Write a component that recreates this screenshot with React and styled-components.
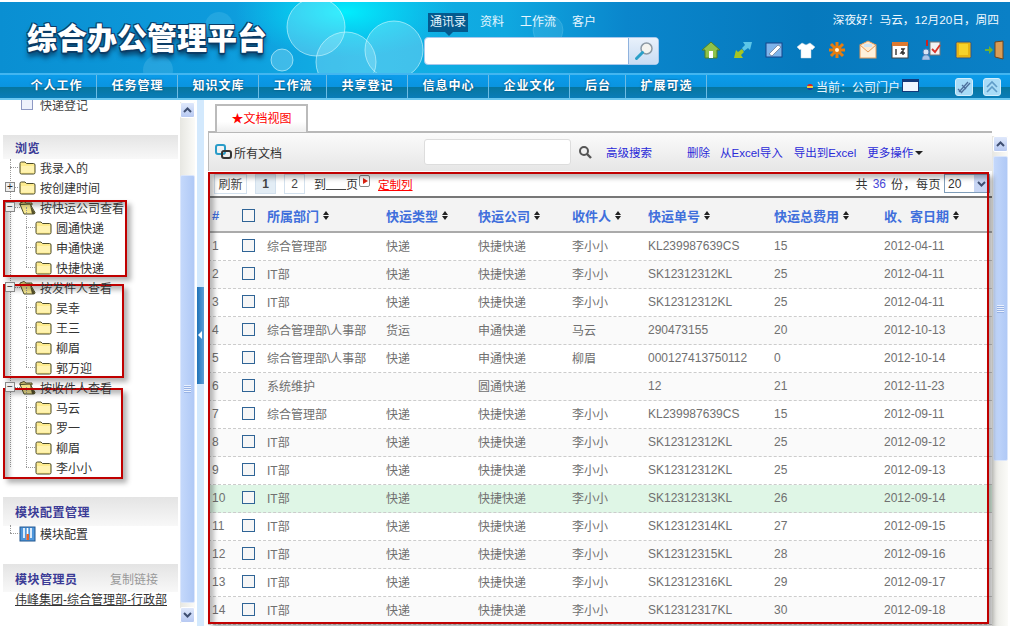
import styled, { createGlobalStyle } from 'styled-components';

const CJK = `"Liberation Sans", "Noto Sans CJK SC", sans-serif`;

const GlobalStyle = createGlobalStyle`
  html, body { margin: 0; padding: 0; background: #fff; }
  body { font-family: ${CJK}; font-size: 12px; color: #333; }
  * { box-sizing: border-box; }
`;

const NAV_ITEMS = [
  ['个人工作', 81], ['任务管理', 81], ['知识文库', 81], ['工作流', 68], ['共享登记', 81],
  ['信息中心', 81], ['企业文化', 81], ['后台', 56], ['扩展可选', 81],
];

const ROWS = [
  ['综合管理部', '快递', '快捷快递', '李小小', 'KL239987639CS', '15', '2012-04-11'],
  ['IT部', '快递', '快捷快递', '李小小', 'SK12312312KL', '25', '2012-04-11'],
  ['IT部', '快递', '快捷快递', '李小小', 'SK12312312KL', '25', '2012-04-11'],
  ['综合管理部\\人事部', '货运', '申通快递', '马云', '290473155', '20', '2012-10-13'],
  ['综合管理部\\人事部', '快递', '申通快递', '柳眉', '000127413750112', '0', '2012-10-14'],
  ['系统维护', '', '圆通快递', '', '12', '21', '2012-11-23'],
  ['综合管理部', '快递', '快捷快递', '李小小', 'KL239987639CS', '15', '2012-09-11'],
  ['IT部', '快递', '快捷快递', '李小小', 'SK12312312KL', '25', '2012-09-12'],
  ['IT部', '快递', '快捷快递', '李小小', 'SK12312312KL', '25', '2012-09-13'],
  ['IT部', '快递', '快捷快递', '李小小', 'SK12312313KL', '26', '2012-09-14'],
  ['IT部', '快递', '快捷快递', '李小小', 'SK12312314KL', '27', '2012-09-15'],
  ['IT部', '快递', '快捷快递', '李小小', 'SK12312315KL', '28', '2012-09-16'],
  ['IT部', '快递', '快捷快递', '李小小', 'SK12312316KL', '29', '2012-09-17'],
  ['IT部', '快递', '快捷快递', '李小小', 'SK12312317KL', '30', '2012-09-18'],
];

const COLUMNS = ['所属部门', '快运类型', '快运公司', '收件人', '快运单号', '快运总费用', '收、寄日期'];

const TREE = [
  { label: '我录入的', kind: 'leaf' },
  { label: '按创建时间', kind: 'closed' },
  { label: '按快运公司查看', kind: 'open', children: ['圆通快递', '申通快递', '快捷快递'] },
  { label: '按发件人查看', kind: 'open', children: ['吴幸', '王三', '柳眉', '郭万迎'] },
  { label: '按收件人查看', kind: 'open', children: ['马云', '罗一', '柳眉', '李小小'] },
];

const Folder = () => (
  <svg width="17" height="15" viewBox="0 0 17 15">
    <path d="M1 3.5 Q1 2 2.5 2 H6 L7.5 3.5 H14.5 Q16 3.5 16 5 V12.5 Q16 14 14.5 14 H2.5 Q1 14 1 12.5 Z" fill="#fdeb8e" stroke="#4a4a2a" strokeWidth="1" />
    <path d="M2 6 H15 V12.5 H2 Z" fill="#fff3b0" />
  </svg>
);

const OpenFolder = () => (
  <svg width="17" height="15" viewBox="0 0 17 15">
    <path d="M1 3 L5 1.5 L7 3 H13 V5 H1 Z" fill="#e4d27a" stroke="#55502a" strokeWidth="1" />
    <path d="M1 4.5 L11 4 L16 12.5 Q16 14 14.5 14 H5 Z" fill="#f6e78f" stroke="#4a4a2a" strokeWidth="1" />
    <path d="M11 5 L16 13 V14 H13 Z" fill="#55502a" />
  </svg>
);

const ScrollArrow = ({ down }) => (
  <svg width="9" height="6" viewBox="0 0 9 6">
    <path d={down ? 'M1 1 L4.5 4.5 L8 1' : 'M1 5 L4.5 1.5 L8 5'} fill="none" stroke="#3f4f72" strokeWidth="2" />
  </svg>
);

const HEAD_ICONS = [
  <g key="home">
    <path d="M10 2 L19 10 H16 V18 H4 V10 H1 Z" fill="#8fc24a" stroke="#4d7f27" />
    <rect x="8" y="11" width="4" height="7" fill="#fff" />
  </g>,
  <g key="arrows">
    <path d="M1 18 L3 10 L5 12 L9 9 L11 12 L8 15 L10 18 Z" fill="#a7c521" />
    <path d="M19 2 L17 10 L15 8 L11 11 L9 8 L12 5 L10 2 Z" fill="#5cc6e8" />
  </g>,
  <g key="edit">
    <rect x="2" y="3" width="16" height="14" fill="#7fb4ea" stroke="#16448a" />
    <path d="M5 14 L14 5 L17 7 L8 16 Z" fill="#fff" stroke="#52627c" strokeWidth="0.6" />
  </g>,
  <path key="shirt" d="M6 3 L10 5 L14 3 L19 7 L16 10 L15 9 V18 H5 V9 L4 10 L1 7 Z" fill="#fff" stroke="#cfd6dc" strokeWidth="0.5" />,
  <g key="gear" stroke="#e57d0f" strokeWidth="3">
    <path d="M10 2 V18 M2 10 H18 M4 4 L16 16 M16 4 L4 16" />
    <circle cx="10" cy="10" r="3" fill="#fff3d6" stroke="#e57d0f" strokeWidth="2" />
  </g>,
  <g key="mail">
    <rect x="2" y="5" width="16" height="13" fill="#fff1dc" stroke="#e59a5a" />
    <path d="M2 5 L10 1 L18 5 L10 12 Z" fill="#fde9d0" stroke="#e59a5a" />
    <rect x="6" y="4" width="8" height="3" fill="#cfe4f5" />
  </g>,
  <g key="calendar">
    <rect x="2" y="4" width="16" height="14" fill="#fff" stroke="#444" />
    <rect x="2" y="2" width="16" height="4" fill="#dd7a30" />
    <path d="M6 9 V15 M11 9 H14 L11 13 H15 M13 9 V15" stroke="#333" strokeWidth="1.4" fill="none" />
  </g>,
  <g key="person">
    <rect x="9" y="2" width="10" height="13" fill="#f2f2f2" stroke="#777" />
    <path d="M11 9 L14 12 L19 5" stroke="#d9342b" strokeWidth="1.8" fill="none" />
    <circle cx="5" cy="12" r="3" fill="#d9e6f5" stroke="#5a7fb5" />
    <path d="M1 20 Q1 15 5 15 Q9 15 9 20 Z" fill="#a9c4e8" stroke="#5a7fb5" strokeWidth="0.6" />
    <rect x="5" y="0" width="2" height="6" fill="#c22" />
  </g>,
  <g key="note">
    <rect x="3" y="2" width="15" height="16" rx="1.5" fill="#e7b413" stroke="#31568a" />
    <rect x="6" y="4" width="9" height="11" fill="#f8d32a" />
  </g>,
  <g key="exit">
    <path d="M11 2 L19 1 V19 L11 17 Z" fill="#d99c56" stroke="#6a4520" />
    <path d="M1 9 H5 V6 L9 10 L5 14 V11 H1 Z" fill="#6fb22f" />
  </g>,
];

const Header = styled.header`
  position: relative;
  height: 71px;
  margin-top: 2px;
  overflow: hidden;
  background: linear-gradient(90deg, #0a8fd2 0%, #0d9bdc 22%, #12b2e6 36%, #0fa8e0 50%, #0a86cc 62%, #0679bd 80%, #0a80c6 100%);
`;

const HeaderArt = styled.svg`
  position: absolute;
  inset: 0;
`;

const HeaderInner = styled.div`
  position: relative;
  display: flex;
  height: 100%;
`;

const Logo = styled.div`
  width: 424px;
  padding: 17px 0 0 27px;
  font-size: 30px;
  line-height: 40px;
  font-weight: 900;
  white-space: nowrap;
  color: #fff;
  text-shadow: 1px 1px 0 #0b3c66, -1px 1px 0 #0b3c66, 1px -1px 0 #0b3c66, -1px -1px 0 #0b3c66, 0 2px 1px #0b3c66, 0 5px 5px #083a60;
`;

const SearchArea = styled.div`
  width: 236px;
  padding-top: 11px;
`;

const SearchTabs = styled.div`
  display: flex;
  height: 24px;
  padding-left: 4px;
`;

const SearchTab = styled.span`
  position: relative;
  height: 19px;
  line-height: 19px;
  padding: 0 2px;
  margin-right: ${(p) => p.$gap}px;
  color: #e6f6ff;
  background: ${(p) => (p.$active ? '#045a8e' : 'transparent')};

  ${(p) => p.$active && `
    &::after {
      content: '';
      position: absolute;
      left: 17px;
      bottom: -4px;
      border: 4px solid transparent;
      border-bottom: 0;
      border-top-color: #045a8e;
    }
  `}
`;

const SearchBox = styled.div`
  display: flex;
  width: 235px;
  height: 28px;
  border-radius: 4px;
  overflow: hidden;
  border: 1px solid #a8c8ec;
  background: #fff;
`;

const SearchField = styled.div`
  flex: 1;
`;

const SearchButton = styled.div`
  width: 30px;
  display: flex;
  align-items: center;
  justify-content: center;
  border-left: 1px solid #8fb2de;
  background: linear-gradient(#e8f1fb, #c9dcf3);
`;

const HeaderRight = styled.div`
  flex: 1;
  display: flex;
  flex-direction: column;
  align-items: flex-end;
  padding: 10px 11px 0 0;
`;

const Greeting = styled.div`
  height: 16px;
  line-height: 16px;
  color: #f0f9ff;
  font-size: 11.7px;
  white-space: nowrap;
`;

const IconRow = styled.div`
  display: flex;
  gap: 11.4px;
  margin-top: 12px;
  margin-right: -5px;
`;

const Nav = styled.nav`
  display: flex;
  align-items: stretch;
  height: 27px;
  padding-left: 16px;
  border-top: 2px solid #43b6f0;
  border-bottom: 2px solid #6cc8f0;
  background: linear-gradient(#0b9cea 0%, #0a94e0 50%, #06769f 52%, #0a7db8 100%);
`;

const NavItem = styled.div`
  width: ${(p) => p.$width}px;
  padding-left: 1px;
  text-align: center;
  line-height: 23px;
  font-weight: 700;
  font-size: 12px;
  letter-spacing: 1px;
  color: #fff;
  text-shadow: 0 0 2px #06406a;
  border-right: 1px solid #6dbbe3;
`;

const NavRight = styled.div`
  flex: 1;
  display: flex;
  align-items: center;
  padding-left: 100px;
  color: #eaf7ff;
  font-size: 12px;
`;

const CurrentDot = styled.span`
  width: 6px;
  height: 6px;
  margin-right: 3px;
  border-radius: 50%;
  background: linear-gradient(#d22 0 33%, #ec3 33% 66%, #23a 66%);
`;

const WindowIcon = styled.span`
  width: 17px;
  height: 13px;
  margin: -3px 0 0 2px;
  border: 1px solid #123a7a;
  border-top-width: 3px;
  background: #eef6ff;
`;

const NavButton = styled.span`
  display: flex;
  align-items: center;
  justify-content: center;
  width: 18px;
  height: 18px;
  margin-left: ${(p) => p.$gap}px;
  border-radius: 3px;
  background: #a9dcf7;
  border: 1px solid #d4eefb;
`;

const Body = styled.div`
  position: relative;
  display: flex;
  height: 526px;
  overflow: hidden;
`;

const Sidebar = styled.aside`
  width: 180px;
  flex: none;
  overflow: hidden;
`;

const TopEntry = styled.div`
  display: flex;
  align-items: center;
  gap: 7px;
  height: 18px;
  margin-top: -5px;
  padding-left: 21px;
  color: #444;
`;

const EntryBox = styled.span`
  width: 12px;
  height: 12px;
  border: 1px solid #8e99c4;
  background: #eef2fc;
`;

const SectionHead = styled.div`
  display: flex;
  justify-content: space-between;
  align-items: center;
  height: ${(p) => p.$height}px;
  margin: ${(p) => p.$top}px 2px 0 3px;
  padding: 0 20px 0 12px;
  background: linear-gradient(#e4e4e4, #f8f8f8);
`;

const SectionTitle = styled.span`
  color: #3b3b96;
  font-weight: 700;
  font-size: 12px;
  letter-spacing: 0.5px;
`;

const CopyLink = styled.span`
  color: #999;
`;

const Tree = styled.div`
  position: relative;
  margin-top: ${(p) => p.$top}px;

  &::before {
    content: '';
    position: absolute;
    left: 10px;
    top: 2px;
    bottom: 10px;
    border-left: 1px dotted #999;
  }
`;

const TreeRow = styled.div`
  position: relative;
  display: flex;
  align-items: center;
  height: 20px;
  padding-left: ${(p) => (p.$child ? 35 : 19)}px;
  color: #333;
  white-space: nowrap;

  &::before {
    content: '';
    position: absolute;
    left: ${(p) => (p.$child ? 26 : 10)}px;
    width: ${(p) => (p.$child ? 9 : 10)}px;
    top: 10px;
    border-top: 1px dotted #999;
  }

  ${(p) => p.$child && `
    &::after {
      content: '';
      position: absolute;
      left: 26px;
      top: -10px;
      height: 20px;
      border-left: 1px dotted #999;
    }
  `}
`;

const TreeToggle = styled.span`
  position: absolute;
  z-index: 1;
  left: 5px;
  top: 5px;
  width: 10px;
  height: 10px;
  line-height: 7px;
  text-align: center;
  font-size: 10px;
  color: #222;
  background: #eee;
  border: 1px solid #888;
`;

const TreeLabel = styled.span`
  margin-left: 4px;
  position: relative;
  z-index: 1;
`;

const OwnerLink = styled.div`
  margin: -1px 0 0 15px;
  color: #333;
  text-decoration: underline;
  white-space: nowrap;
  line-height: 18px;
`;

const ScrollBar = styled.div`
  width: ${(p) => p.$width}px;
  flex: none;
  display: flex;
  flex-direction: column;
  align-items: center;
  height: 521px;
  margin-top: ${(p) => p.$top}px;
  background: linear-gradient(90deg, #e7e7e2, #fbfbf8);
`;

const ScrollButton = styled.div`
  display: flex;
  align-items: center;
  justify-content: center;
  width: 15px;
  height: 16px;
  flex: none;
  border-radius: 2px;
  border: 1px solid #fff;
  background: linear-gradient(#dfe8fb, #b7c9f2);
`;

const ScrollThumb = styled.div`
  display: flex;
  align-items: center;
  justify-content: center;
  width: 15px;
  height: ${(p) => p.$height}px;
  margin-top: ${(p) => p.$top}px;
  border-radius: 2px;
  border: 1px solid #dbe6fb;
  background: linear-gradient(90deg, #c4d8fb, #b0c9f6);
`;

const ScrollGap = styled.div`
  flex: 1;
`;

const Grip = styled.span`
  width: 7px;
  height: 8px;
  background: repeating-linear-gradient(#e9f0fd 0 1px, #98b3e6 1px 2px);
`;

const Splitter = styled.div`
  width: 7px;
  flex: none;
  display: flex;
  align-items: center;
  margin-left: 2px;
  background: #d3e9fd;
`;

const SplitterHandle = styled.div`
  position: relative;
  width: 100%;
  height: 97px;
  margin-top: -56px;
  background: linear-gradient(90deg, #1f72b8, #5b9fd6);

  &::after {
    content: '';
    position: absolute;
    left: 1px;
    top: 44px;
    border: 4px solid transparent;
    border-left: 0;
    border-right-color: #fff;
  }
`;

const Main = styled.main`
  flex: none;
  width: 784px;
  margin-left: 4px;
`;

const TabBar = styled.div`
  height: 33px;
  padding: 4px 0 0 7px;
  border-bottom: 2px solid #b8b8b8;
`;

const Tab = styled.div`
  width: 93px;
  height: 28px;
  text-align: center;
  line-height: 27px;
  color: #f00;
  border: 2px solid #bbb;
  border-bottom: 0;
  background: linear-gradient(#fff 60%, #eee);
`;

const Toolbar = styled.div`
  display: flex;
  align-items: center;
  height: 38px;
  padding-left: 6px;
  background: linear-gradient(#fbfbfb, #e6e6e6);
  border-left: 1px solid #bbb;
`;

const ToolTitle = styled.span`
  margin: 0 142px 0 1px;
  color: #333;
`;

const ToolInput = styled.div`
  width: 147px;
  height: 26px;
  background: #fff;
  border: 1px solid #ddd;
  border-radius: 3px;
`;

const ToolSearchIcon = styled.svg`
  margin-left: 7px;
`;

const ToolLink = styled.span`
  margin-left: ${(p) => p.$gap}px;
  color: #2a2ad8;
  white-space: nowrap;
  font-size: 11.5px;
`;

const Caret = styled.span`
  display: inline-block;
  margin-left: 2px;
  vertical-align: 2px;
  border: 4px solid transparent;
  border-bottom: 0;
  border-top: 4px solid #222;
`;

const Pager = styled.div`
  display: flex;
  align-items: center;
  height: 27px;
  padding: 0 2px 0 6px;
  border-bottom: 2px solid #777;
  color: #333;
`;

const PagerButton = styled.span`
  display: flex;
  align-items: center;
  justify-content: center;
  width: ${(p) => p.$width}px;
  height: 20px;
  margin-right: 8px;
  color: #444;
  font-weight: ${(p) => (p.$active ? 700 : 400)};
  background: ${(p) => (p.$active ? '#e3edf5' : '#fff')};
  border: 1px solid #d3e1ee;
`;

const PageTo = styled.span`
  margin-left: 1px;
`;

const PageBlank = styled.span`
  width: 20px;
  height: 13px;
  border-bottom: 1px solid #444;
`;

const NextPage = styled.span`
  width: 11px;
  height: 12px;
  margin: -5px 0 0 1px;
  padding: 2px 0 0 3px;
  border: 1px solid #888;
  border-radius: 2px;

  &::before {
    content: '';
    display: block;
    border: 3.5px solid transparent;
    border-right: 0;
    border-left: 5px solid #d21;
  }
`;

const CustomLink = styled.span`
  margin-left: 8px;
  color: #f00;
  text-decoration: underline;
  font-size: 11.5px;
`;

const PagerRight = styled.div`
  margin-left: auto;
  display: flex;
  align-items: center;
`;

const Count = styled.span`
  color: #4747d8;
  margin: 0 5px;
`;

const PerPage = styled.span`
  letter-spacing: 0.5px;
`;

const PageSelect = styled.span`
  display: flex;
  align-items: center;
  justify-content: space-between;
  width: 46px;
  height: 19px;
  margin-left: 3px;
  padding-left: 3px;
  border: 1px solid #7f9db9;
  font-size: 12px;
`;

const SelectArrow = styled.span`
  display: flex;
  align-items: center;
  justify-content: center;
  width: 15px;
  height: 100%;
  background: #c8d6f4;
`;

const Row = styled.div`
  display: grid;
  grid-template-columns: 30px 25px 119px 92px 94px 76px 126px 110px 1fr;
  align-items: center;
  padding: ${(p) => (p.$head ? '1px 0 0 4px' : '0 0 2px 4px')};
  height: ${(p) => (p.$head ? 35 : 28)}px;
  border-bottom: ${(p) => (p.$head ? '2px solid #aaa' : '1px dashed #ccc')};
  background: ${(p) => p.$bg};
  color: #707070;
  white-space: nowrap;
`;

const HeadCell = styled.div`
  display: flex;
  align-items: center;
  color: #3f6fdc;
  font-weight: 700;
  font-size: 13px;
  white-space: nowrap;
`;

const SortMark = styled.span`
  display: flex;
  flex-direction: column;
  gap: 1px;
  margin-left: 4px;

  &::before,
  &::after {
    content: '';
    border: 3.5px solid transparent;
  }

  &::before {
    border-top: 0;
    border-bottom: 4px solid #222;
  }

  &::after {
    border-bottom: 0;
    border-top: 4px solid #222;
  }
`;

const Check = styled.span`
  display: block;
  width: 13px;
  height: 13px;
  border: 1px solid #2f6496;
  background: #f6f6f6;
`;

const Cell = styled.div`
  color: #707070;
  font-family: ${CJK};
`;

const RedBox = styled.div`
  position: absolute;
  left: ${(p) => p.$x}px;
  top: ${(p) => p.$y}px;
  width: ${(p) => p.$w}px;
  height: ${(p) => p.$h}px;
  border: 2px solid #c00000;
  box-shadow: 4px 4px 5px rgba(0, 0, 0, 0.3), inset 4px 4px 5px rgba(0, 0, 0, 0.28);
  pointer-events: none;
`;

const rowBackground = (index) => {
  if (index === 9) return '#dff6e6';
  return index % 2 === 1 ? '#fafafa' : '#fff';
};

const App = () => (
  <>
    <GlobalStyle />
    <Header>
      <HeaderArt width="1010" height="71" viewBox="0 0 1010 71">
        <defs>
          <radialGradient id="glow" cx="0.5" cy="0.5" r="0.5">
            <stop offset="0" stopColor="#00f2ff" stopOpacity="0.95" />
            <stop offset="1" stopColor="#00d8f5" stopOpacity="0" />
          </radialGradient>
        </defs>
        <ellipse cx="345" cy="10" rx="110" ry="45" fill="url(#glow)" />
        <g fill="#bff4ff" fillOpacity="0.28" stroke="#d5faff" strokeOpacity="0.6">
          <circle cx="316" cy="25" r="29" />
          <circle cx="346" cy="60" r="30" />
          <circle cx="394" cy="48" r="29" />
          <circle cx="282" cy="58" r="11" />
          <circle cx="219" cy="24" r="14" fillOpacity="0.12" strokeOpacity="0" />
          <circle cx="158" cy="68" r="15" fillOpacity="0.14" strokeOpacity="0" />
          <circle cx="548" cy="28" r="15" fillOpacity="0.12" strokeOpacity="0.15" />
        </g>
      </HeaderArt>
      <HeaderInner>
        <Logo>综合办公管理平台</Logo>
        <SearchArea>
          <SearchTabs>
            <SearchTab $active $gap={10}>通讯录</SearchTab>
            <SearchTab $gap={12}>资料</SearchTab>
            <SearchTab $gap={12}>工作流</SearchTab>
            <SearchTab $gap={0}>客户</SearchTab>
          </SearchTabs>
          <SearchBox>
            <SearchField />
            <SearchButton>
              <svg width="20" height="20" viewBox="0 0 20 20">
                <circle cx="12.5" cy="7.5" r="5.5" fill="#f4f4f0" stroke="#8d9aa5" strokeWidth="1.5" />
                <path d="M8.5 11.5 L2.5 17.5" stroke="#2aa0c8" strokeWidth="3" strokeLinecap="round" />
              </svg>
            </SearchButton>
          </SearchBox>
        </SearchArea>
        <HeaderRight>
          <Greeting>深夜好！马云，12月20日，周四</Greeting>
          <IconRow>
            {HEAD_ICONS.map((icon) => (
              <svg key={icon.key} width="20" height="20" viewBox="0 0 20 20">
                {icon}
              </svg>
            ))}
          </IconRow>
        </HeaderRight>
      </HeaderInner>
    </Header>

    <Nav>
      {NAV_ITEMS.map(([label, width]) => (
        <NavItem key={label} $width={width}>
          {label}
        </NavItem>
      ))}
      <NavRight>
        <CurrentDot />
        当前：公司门户
        <WindowIcon />
        <NavButton $gap={36}>
          <svg width="14" height="14" viewBox="0 0 14 14">
            <path d="M2 12 L11 2 M4 13 L13 3 M1 9 L5 13 M5 5 L9 9" stroke="#4d6f9c" strokeWidth="1.3" fill="none" />
          </svg>
        </NavButton>
        <NavButton $gap={10}>
          <svg width="14" height="14" viewBox="0 0 14 14">
            <path d="M2 7 L7 2 L12 7 M2 12 L7 7 L12 12" stroke="#5f9cc8" strokeWidth="1.6" fill="none" />
          </svg>
        </NavButton>
      </NavRight>
    </Nav>

    <Body>
      <Sidebar>
        <TopEntry>
          <EntryBox />
          快递登记
        </TopEntry>
        <SectionHead $height={24} $top={22}>
          <SectionTitle>浏览</SectionTitle>
        </SectionHead>
        <Tree $top={-2}>
          {TREE.map((node) => (
            <div key={node.label}>
              <TreeRow>
                {node.kind !== 'leaf' && <TreeToggle>{node.kind === 'open' ? '−' : '+'}</TreeToggle>}
                {node.kind === 'open' ? <OpenFolder /> : <Folder />}
                <TreeLabel>{node.label}</TreeLabel>
              </TreeRow>
              {node.children?.map((child) => (
                <TreeRow $child key={child}>
                  <Folder />
                  <TreeLabel>{child}</TreeLabel>
                </TreeRow>
              ))}
            </div>
          ))}
        </Tree>
        <SectionHead $height={29} $top={20}>
          <SectionTitle>模块配置管理</SectionTitle>
        </SectionHead>
        <Tree $top={-3}>
          <TreeRow>
            <svg width="17" height="17" viewBox="0 0 17 17">
              <rect x="1" y="2" width="15" height="14" fill="#4f97dc" stroke="#23578f" />
              <path d="M5 3 V13 M8.5 3 V15 M12 3 V13" stroke="#fff" strokeWidth="1.6" />
              <rect x="7.5" y="9" width="2.5" height="6" fill="#e8652a" />
            </svg>
            <TreeLabel>模块配置</TreeLabel>
          </TreeRow>
        </Tree>
        <SectionHead $height={28} $top={21}>
          <SectionTitle>模块管理员</SectionTitle>
          <CopyLink>复制链接</CopyLink>
        </SectionHead>
        <OwnerLink>伟峰集团-综合管理部-行政部</OwnerLink>
      </Sidebar>

      <ScrollBar $width={15} $top={2}>
        <ScrollButton>
          <ScrollArrow />
        </ScrollButton>
        <ScrollThumb $height={428} $top={57}>
          <Grip />
        </ScrollThumb>
        <ScrollGap />
        <ScrollButton>
          <ScrollArrow down />
        </ScrollButton>
      </ScrollBar>

      <Splitter>
        <SplitterHandle />
      </Splitter>

      <Main>
        <TabBar>
          <Tab>★文档视图</Tab>
        </TabBar>
        <Toolbar>
          <svg width="18" height="16" viewBox="0 0 18 16">
            <rect x="1" y="1" width="9" height="9" rx="2" fill="none" stroke="#2a9cc8" strokeWidth="2" />
            <rect x="7" y="7" width="9" height="7" rx="2" fill="none" stroke="#333" strokeWidth="2" />
          </svg>
          <ToolTitle>所有文档</ToolTitle>
          <ToolInput />
          <ToolSearchIcon width="14" height="14" viewBox="0 0 14 14">
            <circle cx="6" cy="6" r="4" fill="none" stroke="#555" strokeWidth="2" />
            <path d="M9 9 L13 13" stroke="#555" strokeWidth="2.4" />
          </ToolSearchIcon>
          <ToolLink $gap={14}>高级搜索</ToolLink>
          <ToolLink $gap={35}>删除</ToolLink>
          <ToolLink $gap={10}>从Excel导入</ToolLink>
          <ToolLink $gap={11}>导出到Excel</ToolLink>
          <ToolLink $gap={11}>
            更多操作
            <Caret />
          </ToolLink>
        </Toolbar>
        <Pager>
          <PagerButton $width={33}>刷新</PagerButton>
          <PagerButton $width={21} $active>1</PagerButton>
          <PagerButton $width={21}>2</PagerButton>
          <PageTo>到</PageTo>
          <PageBlank />
          页
          <NextPage />
          <CustomLink>定制列</CustomLink>
          <PagerRight>
            共<Count>36</Count><PerPage>份，每页</PerPage>
            <PageSelect>
              20
              <SelectArrow>
                <ScrollArrow down />
              </SelectArrow>
            </PageSelect>
          </PagerRight>
        </Pager>
        <Row $head $bg="#f3f3f3">
          <HeadCell>#</HeadCell>
          <Check />
          {COLUMNS.map((column) => (
            <HeadCell key={column}>
              {column}
              <SortMark />
            </HeadCell>
          ))}
        </Row>
        {ROWS.map((row, index) => (
          <Row key={index} $bg={rowBackground(index)}>
            <Cell>{index + 1}</Cell>
            <Check />
            {row.map((value, col) => (
              <Cell key={col}>{value}</Cell>
            ))}
          </Row>
        ))}
      </Main>

      <ScrollBar $width={16} $top={36}>
        <ScrollButton>
          <ScrollArrow />
        </ScrollButton>
        <ScrollThumb $height={305} $top={4}>
          <Grip />
        </ScrollThumb>
        <ScrollGap />
        <ScrollButton>
          <ScrollArrow down />
        </ScrollButton>
      </ScrollBar>

      <RedBox $x={3} $y={100} $w={124} $h={77} />
      <RedBox $x={3} $y={184} $w={121} $h={94} />
      <RedBox $x={3} $y={288} $w={120} $h={91} />
      <RedBox $x={208} $y={72} $w={781} $h={452} />
    </Body>
  </>
);

export default App;
